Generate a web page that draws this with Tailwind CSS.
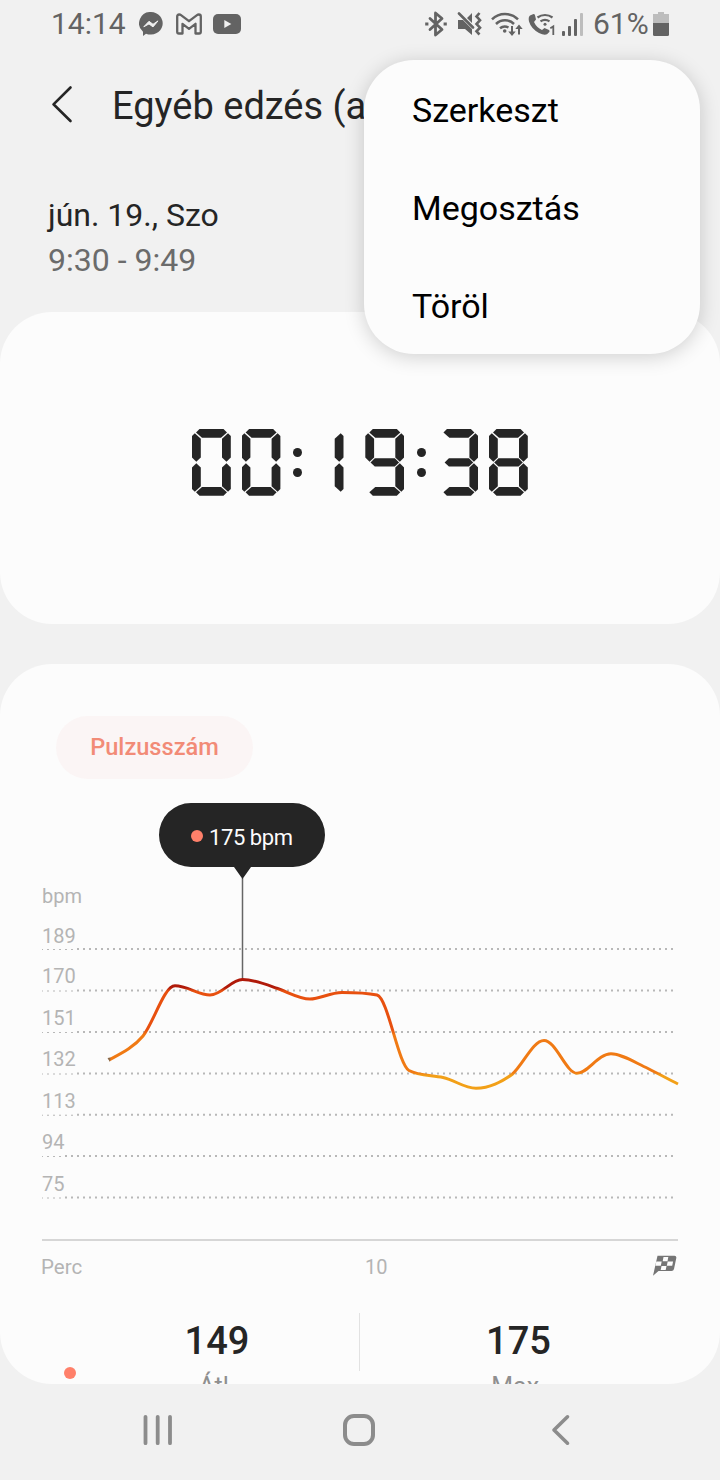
<!DOCTYPE html>
<html lang="hu">
  <head>
    <meta charset="UTF-8" />
    <meta name="viewport" content="width=device-width, initial-scale=1.0" />
    <title>Egyéb edzés</title>
    <script src="https://cdn.jsdelivr.net/npm/@tailwindcss/browser@4"></script>
  </head>
  <body class="bg-[#f1f1f1] font-['Roboto',sans-serif] text-[#252525]">
    <div class="relative flex flex-col w-[720px] h-[1480px] overflow-hidden">
      <!-- Status bar -->
      <div class="flex items-center h-12 pl-[51px] pr-[51px] text-[30px] leading-none text-[#636363]">
        <span class="w-[88px]">14:14</span>
        <svg class="w-6 h-6" viewBox="0 0 24 24" fill="#636363">
          <path d="M12 0a12 11.3 0 1 1-5 21.7L4 24v-4.2A11.3 11.3 0 0 1 12 0z" />
          <path d="M4.8 14.8 10 9.3l4 3 5-3.4-5 6-4-3z" fill="#f1f1f1" stroke="#f1f1f1" stroke-width="1" stroke-linejoin="round" />
        </svg>
        <svg class="w-[26px] h-[22px] ml-[13px]" viewBox="0 0 26 22" fill="none" stroke="#636363" stroke-width="2.300" stroke-linejoin="round">
          <path d="M1.2 3.6v15.2q0 1.7 1.7 1.7h3.6V10.8l6.5 5 6.500-5v9.700h3.600q1.700 0 1.700-1.700V3.600Q24.800 1.500 22.800 1.500q-1 0-1.800.6L13 8.200 5 2.100Q4.200 1.500 3.200 1.500 1.200 1.500 1.200 3.600z" />
        </svg>
        <svg class="w-7 h-5 ml-[11px]" viewBox="0 0 28 20">
          <rect width="28" height="20" rx="5" fill="#636363" />
          <path d="M11.300 6v8l7-4z" fill="#f1f1f1" />
        </svg>

        <div class="flex items-center ml-auto">
          <svg class="w-6 h-[26px]" viewBox="0 0 24 26" fill="none" stroke="#636363" stroke-width="2.800">
            <path d="m6 7.500 12 11-6.500 5.500V2l6.500 5.500-12 11" stroke-linejoin="round" stroke-linecap="round" />
            <path d="M1.200 13h3.200M19.600 13h3.200" stroke-width="3" />
          </svg>
          <svg class="w-[26px] h-6 ml-[9px]" viewBox="0 0 26 24" fill="#636363">
            <path d="M1 8h5l9 9v6l-7-6H1zM15 1v10l-5-5z" />
            <path d="M2 1.500 16 15.500" stroke="#636363" stroke-width="2.600" stroke-linecap="round" />
            <path d="m22.500 1-3 3.500 3.500 3.700-3.500 3.800 3.500 3.700-3.500 3.600 3 3.200" fill="none" stroke="#636363" stroke-width="2.600" />
          </svg>
          <svg class="w-8 h-[26px] ml-[8px]" viewBox="0 0 32 26" fill="none" stroke="#636363" stroke-width="2.500">
            <path d="M1 8.300a18.500 18.500 0 0 1 26 0M5 13a12.800 12.800 0 0 1 18 0M9 17.300a7.500 7.500 0 0 1 8.500-.8" />
            <circle cx="13.700" cy="20" r="1.800" fill="#636363" stroke="none" />
            <path d="M21 15v8M28 23.500v-8" stroke-width="2" />
            <path d="M17.300 20.500h7.400L21 25zM24.300 18h7.400L28 13.500z" fill="#636363" stroke="none" />
          </svg>
          <svg class="w-[28px] h-6 ml-[5px]" viewBox="0 0 28 24" fill="#636363">
            <path d="M2 3.500 5.500 2q1.200 0 1.500 1.300L8 7.500 6 10q2.500 5.500 8 8l2.500-2 4.500 2q1 .8.300 2L19 22.300Q16 23.500 11 21 3 16.500 1 9.500 0 5 2 3.500z" />
            <path d="M9.500 5.500a12.500 12.500 0 0 1 15 0M12.500 9.300a8 8 0 0 1 9 0" fill="none" stroke="#636363" stroke-width="2.200" />
            <circle cx="17" cy="12.200" r="1.500" />
            <path d="m22.300 16.200 3-1.800v8.600" fill="none" stroke="#636363" stroke-width="1.800" />
          </svg>
          <svg class="w-[22px] h-6 ml-[6px]" viewBox="0 0 22 24" fill="#636363">
            <rect y="19" width="3" height="5" rx="1" />
            <rect x="6" y="14" width="3" height="10" rx="1" />
            <rect x="12" y="7" width="3" height="17" rx="1" />
            <rect x="18" y="1" width="3" height="23" rx="1" fill="#bdbdbd" />
          </svg>
          <span class="w-[69px] pl-[9px]">61%</span>
          <svg class="w-4 h-6" viewBox="0 0 16 24">
            <path d="M5 0h6v2h5v10H0V2h5z" fill="#bdbdbd" />
            <path d="M0 11h16v11.500q0 1.500-1.500 1.500h-13Q0 24 0 22.500z" fill="#636363" />
          </svg>
        </div>
      </div>

      <!-- Title bar -->
      <div class="flex items-center h-[116px] pl-[51px]">
        <svg class="w-6 h-10 -mt-1 shrink-0" viewBox="0 0 24 40" fill="none" stroke="#252525" stroke-width="2.600" stroke-linecap="round" stroke-linejoin="round">
          <path d="M19.500 3.500 2.500 20.300l17 16.700" />
        </svg>
        <h1 class="ml-[37px] text-[38px] whitespace-nowrap">Egyéb edzés (a</h1>
      </div>

      <div class="h-[148px] pt-[29px] pl-12 text-[32px] leading-[45px]">
        <div>jún. 19., Szo</div>
        <div class="text-[#6b6b6b]">9:30 - 9:49</div>
      </div>

      <!-- Elapsed time -->
      <div class="h-[312px] shrink-0 rounded-[52px] bg-[#fcfcfc] pt-[117px]">
        <div id="timer" role="timer" aria-label="00:19:38" class="flex w-[336px] ml-[192px]"></div>
      </div>

      <!-- Heart rate -->
      <div class="h-[720px] shrink-0 mt-10 rounded-[52px] bg-[#fcfcfc] overflow-hidden">
        <div class="flex items-center justify-center w-[197px] h-[63px] mt-[52px] ml-14 pt-px rounded-full bg-[#fbf5f5] text-[23.6px] font-medium text-[#f28b77]">
          Pulzusszám
        </div>

        <svg class="block w-[720px] h-[511px]" viewBox="0 779 720 511">
          <defs>
            <linearGradient id="zones" gradientUnits="userSpaceOnUse" x1="0" y1="980" x2="0" y2="1090">
              <stop offset="0.070" stop-color="#b01a0a" />
              <stop offset="0.100" stop-color="#e8500f" />
              <stop offset="0.450" stop-color="#e8500f" />
              <stop offset="0.500" stop-color="#f07a14" />
              <stop offset="0.840" stop-color="#f07a14" />
              <stop offset="0.870" stop-color="#f2a018" />
            </linearGradient>
          </defs>
          <g id="gridLines" stroke="#b8b8b8" stroke-width="2" stroke-dasharray="2 4" stroke-dashoffset="1"></g>
          <g id="gridLabels" fill="#b4b4b4" font-size="20">
            <text x="42" y="903">bpm</text>
            <text x="41" y="1274" font-size="20.500">Perc</text>
            <text x="365" y="1274">10</text>
          </g>
          <path d="M42 1240h636" stroke="#d6d6d6" stroke-width="2" />
          <path d="M242.500 878v101" stroke="#666" stroke-width="1.500" />
          <path
            d="M109 1060C122 1053 134 1047 143 1036C154 1022 164 986 175 985.800C187 985.800 199 995 210 995C222 995 231 979.500 242.500 979.500C254 979.500 265 984 276 988C288 992 299 999 310 999C320 999 330 992.500 342 992.500C354 992.500 365 992.500 377 995C388 998 398 1064 409 1070.500C419 1076 432 1075 443 1077.500C455 1080 464 1088.300 476 1088.300C490 1088.300 501 1082 512 1074.500C523 1065 533 1040.500 544 1040.500C556 1040.500 566 1073.300 577 1073.300C588 1073.300 598 1053.800 611 1053.800C621 1053.800 634 1062 648 1068.500C658 1073.500 668 1079 678 1084"
            fill="none" stroke="url(#zones)" stroke-width="3"
          />
          <path d="m107.500 1058 3-.5-.5 4.500z" fill="#8a6a4a" />
          <path d="M191 803h102a32 32 0 0 1 0 64h-42l-8.500 12-8.500-12h-43a32 32 0 0 1 0-64z" fill="#252525" />
          <circle cx="197" cy="836" r="6" fill="#ff806a" />
          <text x="209" y="845" fill="#fcfcfc" font-size="22" textLength="84">175 bpm</text>
          <!-- finish flag -->
          <g transform="translate(652 1255)">
            <path d="M5.500.8h17q2.200 0 1.800 2.300L22 14q-.5 2-2.500 2H6.500L1 20.800z" fill="#757575" />
            <path d="M11.500 2h4.800l-.8 4.200h-4.800zM4.300 6.500h5.400l-.9 4.200H3.400zM15.700 6.500h5.400l-.9 4.200h-5.400zM9.500 11h5l-.8 4h-5z" fill="#fcfcfc" />
          </g>
        </svg>

        <div class="relative flex pt-[23px] ml-[75px] text-center">
          <span class="absolute -left-[11px] top-[77px] w-3 h-3 rounded-full bg-[#ff806a]"></span>
          <div class="w-[285px] h-[58px] border-r border-[#e2e2e2]">
            <div class="pt-[5px] text-[38px] leading-[46px] font-medium">149</div>
            <div class="pt-[7px] text-[25px] leading-[32px] text-[#8f8f8f]">Átl.</div>
          </div>
          <div class="w-[317px]">
            <div class="pt-[5px] text-[38px] leading-[46px] font-medium">175</div>
            <div class="pt-[7px] text-[25px] leading-[32px] text-[#8f8f8f]">Max.</div>
          </div>
        </div>
      </div>

      <!-- Navigation bar -->
      <div class="flex items-center h-24 pl-[142px] pt-0 pb-[4px]">
        <svg class="w-8 h-8" viewBox="0 0 32 32" stroke="#8c8c8c" stroke-width="3.800" stroke-linecap="round">
          <path d="M3.500 2.800v26.400M15.700 2.800v26.400M28 2.800v26.400" />
        </svg>
        <svg class="w-8 h-8 ml-[169px]" viewBox="0 0 32 32" fill="none" stroke="#8c8c8c" stroke-width="4">
          <rect x="2" y="2" width="28" height="28" rx="9" />
        </svg>
        <svg class="w-5 h-8 ml-[176px]" viewBox="0 0 20 32" fill="none" stroke="#8c8c8c" stroke-width="3.600" stroke-linecap="round" stroke-linejoin="round">
          <path d="M16.500 2.800 3 16l13.500 13.200" />
        </svg>
      </div>

      <!-- Overflow menu -->
      <div class="absolute left-[364px] top-[60px] w-[336px] h-[294px] pl-12 pt-[1px] rounded-[50px] bg-[#fcfcfc] text-[34px] leading-[98px] text-black shadow-[0_3px_20px_rgba(0,0,0,0.18)]">
        <div>Szerkeszt</div>
        <div>Megosztás</div>
        <div>Töröl</div>
      </div>
    </div>

    <script>
      // Seven-segment display: every segment fills the same grid cell and is clipped to its bar
      const segments = {
        a: "[clip-path:polygon(7.5px_0px,31.5px_0px,35px_3.6px,29px_8.8px,10px_8.8px,4px_3.6px)]",
        b: "[clip-path:polygon(36px_4.3px,38.8px_7px,38.8px_28.5px,34.5px_32.8px,30px_28.5px,30px_9.8px)]",
        c: "[clip-path:polygon(34.5px_34.2px,38.8px_38.5px,38.8px_60px,36px_62.7px,30px_57.2px,30px_38.5px)]",
        d: "[clip-path:polygon(10px_58px,29px_58px,35px_63.2px,31.5px_66.8px,7.5px_66.8px,4px_63.2px)]",
        e: "[clip-path:polygon(4.3px_34.2px,8.8px_38.5px,8.8px_57.2px,2.8px_62.7px,0px_60px,0px_38.5px)]",
        f: "[clip-path:polygon(2.8px_4.3px,8.8px_9.8px,8.8px_28.5px,4.3px_32.8px,0px_28.5px,0px_7px)]",
        g: "[clip-path:polygon(9.5px_29.2px,29.5px_29.2px,33.8px_33.4px,29.5px_37.6px,9.5px_37.6px,5.2px_33.4px)]",
      };
      const digits = {
        0: "abcdef",
        1: "bc",
        3: "abcdg",
        8: "abcdefg",
        9: "abcdfg",
      };

      const renderTimer = (time) => {
        document.getElementById("timer").innerHTML = [...time]
          .map((char) => {
            if (char === ":") {
              return `
                <div class="flex flex-col items-center justify-center gap-[11px] w-[25px] h-[67px] pr-[11px]">
                  <span class="w-[9px] h-[9px] rounded-full bg-[#252525]"></span>
                  <span class="w-[9px] h-[9px] rounded-full bg-[#252525]"></span>
                </div>`;
            }
            const bars = [...digits[char]]
              .map((s) => `<i class="col-start-1 row-start-1 bg-[#252525] ${segments[s]}"></i>`)
              .join("");
            // the 1 only has right-hand bars, pull it back to the middle of its cell
            const margin = char === "1" ? "-ml-[11px] mr-[21.6px]" : "mr-[10.6px] last:mr-0";
            return `<div class="grid shrink-0 w-[39px] h-[67px] ${margin}">${bars}</div>`;
          })
          .join("");
      };

      const levels = [
        [189, 943, 949],
        [170, 983, 990.5],
        [151, 1025, 1032],
        [132, 1066, 1073.5],
        [113, 1108, 1114.7],
        [94, 1149, 1156],
        [75, 1191, 1197.5],
      ];

      const renderGrid = () => {
        let lines = "";
        let labels = "";
        levels.forEach(([bpm, textY, lineY]) => {
          lines += `<path d="M42 ${lineY}H674" />`;
          labels += `
            <rect x="40" y="${lineY - 2}" width="${bpm > 99 ? 36 : 24}" height="2" fill="#fcfcfc" />
            <text x="42" y="${textY}">${bpm}</text>`;
        });
        document.getElementById("gridLines").innerHTML = lines;
        document.getElementById("gridLabels").innerHTML += labels;
      };

      renderTimer("00:19:38");
      renderGrid();
    </script>
  </body>
</html>
